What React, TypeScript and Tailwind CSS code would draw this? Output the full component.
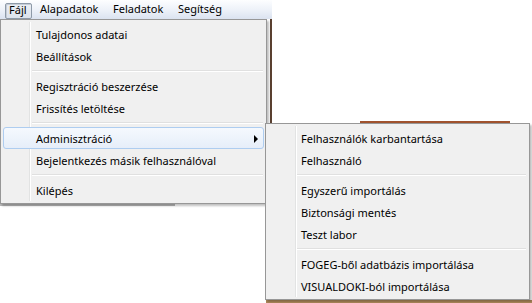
import React from "react";

const font = { fontFamily: '"Noto Sans", "Segoe UI", sans-serif' };

type Entry = { label: string; sub?: boolean; active?: boolean } | "sep";

function Item({ label, sub, active }: { label: string; sub?: boolean; active?: boolean }) {
  return (
    <div
      className={
        "relative h-[22px] flex items-center pl-[32px] pr-2 text-[11px] text-black whitespace-nowrap " +
        (active
          ? "rounded-[3px] border border-[#aecdf0] bg-gradient-to-b from-[#f5f9fe] to-[#e6eef9]"
          : "border border-transparent")
      }
    >
      <span className="leading-none">{label}</span>
      {sub && (
        <svg className="absolute right-[4px] top-[7px]" width="5" height="8" viewBox="0 0 5 8">
          <path d="M0 0 L4 4 L0 8 Z" fill="#000" />
        </svg>
      )}
    </div>
  );
}

function Sep() {
  return (
    <div className="h-[8px] flex flex-col justify-center pl-[29px] pr-[1px]">
      <div className="h-px bg-[#e0e0e0]" />
      <div className="h-px bg-white" />
    </div>
  );
}

function Menu({ entries, gutter }: { entries: Entry[]; gutter: number }) {
  return (
    <div className="relative h-full border border-[#979797] bg-[#f0f0f0] px-[2px] pt-[3px]">
      <div
        className="absolute top-[2px] bottom-[2px] w-[2px] flex"
        style={{ left: gutter }}
      >
        <div className="w-px bg-[#e2e3e3]" />
        <div className="w-px bg-white" />
      </div>
      <div className="relative flex flex-col">
        {entries.map((e, i) =>
          e === "sep" ? <Sep key={i} /> : <Item key={i} {...e} />
        )}
      </div>
    </div>
  );
}

export default function App() {
  const main: Entry[] = [
    { label: "Tulajdonos adatai" },
    { label: "Beállítások" },
    "sep",
    { label: "Regisztráció beszerzése" },
    { label: "Frissítés letöltése" },
    "sep",
    { label: "Adminisztráció", sub: true, active: true },
    { label: "Bejelentkezés másik felhasználóval" },
    "sep",
    { label: "Kilépés" },
  ];
  const sub: Entry[] = [
    { label: "Felhasználók karbantartása" },
    { label: "Felhasználó" },
    "sep",
    { label: "Egyszerű importálás" },
    { label: "Biztonsági mentés" },
    { label: "Teszt labor" },
    "sep",
    { label: "FOGEG-ből adatbázis importálása" },
    { label: "VISUALDOKI-ból importálása" },
  ];
  return (
    <div className="relative w-[532px] h-[303px] bg-white overflow-hidden" style={font}>
      {/* menu bar */}
      <div className="flex items-center w-[272px] h-[19px] bg-gradient-to-b from-[#fdfeff] via-[#eef2f9] to-[#dbe3f0] text-[11px] text-black">
        <div className="ml-[5px] w-[27px] h-[16px] mt-[2px] pl-[3px] flex items-center rounded-[2px] border border-[#8e9aa8] bg-gradient-to-b from-[#eaeef4] to-[#dde3ec] shadow-[inset_1px_1px_0_#c5ccd6]">
          Fájl
        </div>
        <div className="ml-[8px] w-[73px]">Alapadatok</div>
        <div className="w-[65px]">Feladatok</div>
        <div>Segítség</div>
      </div>

      {/* background window fragments */}
      <div className="absolute left-[270px] top-[19px] w-[2px] h-[105px] bg-[#5a4030]" />
      <div className="absolute left-[360px] top-[121px] w-[150px] h-[2px] bg-[#a0522d]" />
      <div className="absolute left-0 top-[204px] w-[175px] h-[2px] bg-[#8a8a8a] opacity-60" />
      <div className="absolute left-[266px] top-[300px] w-[266px] h-[3px] bg-[#b08a5c]" />

      {/* main dropdown */}
      <div className="absolute left-0 top-[19px] w-[267px] h-[185px] shadow-[2px_2px_2px_rgba(0,0,0,0.25)]">
        <Menu entries={main} gutter={28} />
      </div>

      {/* submenu */}
      <div className="absolute left-[265px] top-[123px] w-[265px] h-[177px] shadow-[2px_2px_2px_rgba(0,0,0,0.25)]">
        <Menu entries={sub} gutter={29} />
      </div>
    </div>
  );
}
